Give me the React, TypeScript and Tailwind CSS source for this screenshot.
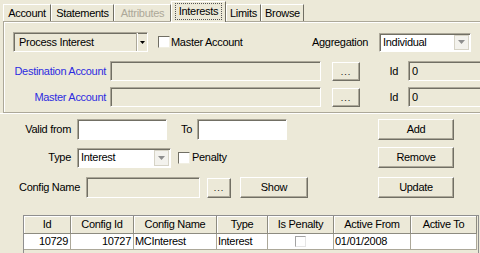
import React from 'react';

const sunken =
  'border border-t-[#aca899] border-l-[#aca899] border-r-white border-b-white shadow-[inset_1px_1px_0_#716f64]';
const raised =
  'flex items-center justify-center bg-[#ece9d8] border border-t-white border-l-white border-r-[#716f64] border-b-[#716f64] shadow-[inset_-1px_-1px_0_#aca899]';

const Check: React.FC<{ className?: string }> = ({ className = '' }) => (
  <div
    className={`w-[12px] h-[12px] shrink-0 bg-white border border-t-[#716f64] border-l-[#716f64] border-r-[#f1efe2] border-b-[#f1efe2] ${className}`}
  />
);

const Btn: React.FC<{ className?: string; children?: React.ReactNode }> = ({ className = '', children }) => (
  <div className={`${raised} shrink-0 ${className}`}>{children}</div>
);

const Dots: React.FC<{ className?: string }> = ({ className = '' }) => (
  <Btn className={className}>
    <span className="text-[9px] tracking-[1px] pt-[2px]">...</span>
  </Btn>
);

const Combo: React.FC<{ className: string; text: string }> = ({ className, text }) => (
  <div className={`${sunken} flex bg-white shrink-0 ${className}`}>
    <div className="flex-1 flex items-center pl-[3px]">{text}</div>
    <div className="w-[15px] my-[1px] mr-[1px] bg-[#f3f2ed] border border-[#d6d3c6] flex items-center justify-center">
      <svg width="7" height="4" viewBox="0 0 7 4">
        <path d="M0 0h7L3.5 4z" fill="#8e8e8e" />
      </svg>
    </div>
  </div>
);

const tabs = [
  { label: 'Account', w: 'w-[48px]' },
  { label: 'Statements', w: 'w-[63px]' },
  { label: 'Attributes', w: 'w-[57px]', disabled: true },
  { label: 'Interests', w: 'w-[55px]', active: true },
  { label: 'Limits', w: 'w-[35px]' },
  { label: 'Browse', w: 'w-[43px]' },
];

const cols = [
  { h: 'Id', v: '10729', align: 'justify-end pr-[2px]' },
  { h: 'Config Id', v: '10727', align: 'justify-end pr-[2px]' },
  { h: 'Config Name', v: 'MCInterest', align: 'justify-start pl-[1px]' },
  { h: 'Type', v: 'Interest', align: 'justify-start pl-[1px]' },
  { h: 'Is Penalty', v: '', align: 'justify-center', check: true },
  { h: 'Active From', v: '01/01/2008', align: 'justify-start pl-[1px]' },
  { h: 'Active To', v: '', align: 'justify-start' },
];

export default function App() {
  return (
    <div className="w-[480px] h-[253px] overflow-hidden bg-[#ece9d8] text-black text-[11px] tracking-[-0.3px] font-['Liberation_Sans',Arial,sans-serif] leading-none">
      {/* tab strip */}
      <div className="h-[21px] flex items-end pl-[3px]">
        {tabs.map((t) => (
          <div
            key={t.label}
            className={`${t.w} shrink-0 flex items-center justify-center border-l border-t border-r border-l-white border-t-white border-r-[#716f64] ${
              t.active ? 'h-[21px] relative z-10 bg-[#ece9d8] -mb-[1px] pb-[2px]' : 'h-[17px]'
            } ${t.disabled ? 'text-[#aca899]' : ''}`}
          >
            {t.active ? (
              <span className="border border-dotted border-[#555] px-[3px] py-[2px]">{t.label}</span>
            ) : (
              t.label
            )}
          </div>
        ))}
      </div>

      {/* upper panel */}
      <div className="ml-[3px] w-[490px] border-l border-t border-b border-[#aca899] shadow-[inset_1px_1px_0_#fff] flex flex-col pt-[10px] pb-[5px]">
        <div className="h-[20px] flex items-center pl-[9px]">
          <div className={`${sunken} w-[135px] h-[20px] flex shrink-0`}>
            <div className="flex-1 flex items-center pl-[5px]">Process Interest</div>
            <div className="w-[11px] border-l border-l-[#aca899] shadow-[inset_1px_0_0_#fff] flex items-center justify-center">
              <svg width="5" height="3" viewBox="0 0 5 3">
                <path d="M0 0h5L2.5 3z" fill="#000" />
              </svg>
            </div>
          </div>
          <Check className="ml-[10px]" />
          <div className="w-[142px] shrink-0 pl-[1px]">Master Account</div>
          <div className="w-[67px] shrink-0">Aggregation</div>
          <Combo className="w-[92px] h-[19px]" text="Individual" />
        </div>

        {['Destination Account', 'Master Account'].map((label, i) => (
          <div key={label} className={`h-[20px] flex items-center ${i === 0 ? 'mt-[9px]' : 'mt-[6px]'}`}>
            <div className="w-[102px] shrink-0 text-right text-[#2c2ce0]">{label}</div>
            <div className={`${sunken} ml-[4px] w-[211px] h-[20px] shrink-0`} />
            <Dots className="ml-[11px] w-[28px] h-[19px]" />
            <div className="w-[38px] shrink-0 text-right">Id</div>
            <div className={`${sunken} ml-[10px] w-[80px] h-[20px] shrink-0 flex items-center pl-[3px]`}>0</div>
          </div>
        ))}
      </div>

      {/* lower section */}
      <div className="border-t border-white pt-[5px]">
        <div className="h-[21px] flex items-center">
          <div className="w-[378px] shrink-0 flex items-center">
            <div className="w-[71px] shrink-0 text-right">Valid from</div>
            <div className={`${sunken} ml-[6px] w-[90px] h-[21px] bg-white shrink-0`} />
            <div className="w-[25px] shrink-0 text-right">To</div>
            <div className={`${sunken} ml-[5px] w-[90px] h-[21px] bg-white shrink-0`} />
          </div>
          <Btn className="w-[76px] h-[21px]">Add</Btn>
        </div>

        <div className="mt-[7px] h-[21px] flex items-center">
          <div className="w-[378px] shrink-0 flex items-center">
            <div className="w-[71px] shrink-0 text-right">Type</div>
            <Combo className="ml-[6px] w-[94px] h-[20px]" text="Interest" />
            <Check className="ml-[7px]" />
            <div className="pl-[2px]">Penalty</div>
          </div>
          <Btn className="w-[76px] h-[21px]">Remove</Btn>
        </div>

        <div className="mt-[9px] h-[21px] flex items-center">
          <div className="w-[378px] shrink-0 flex items-center">
            <div className="w-[80px] shrink-0 text-right">Config Name</div>
            <div className={`${sunken} ml-[6px] w-[114px] h-[21px] shrink-0`} />
            <Dots className="ml-[7px] w-[24px] h-[20px]" />
            <Btn className="ml-[9px] w-[68px] h-[21px]">Show</Btn>
          </div>
          <Btn className="w-[76px] h-[21px]">Update</Btn>
        </div>

        {/* grid */}
        <div className="mt-[17px] ml-[23px] w-[456px] h-[60px] border border-[#8f8f8f] bg-[#ece9d8]">
          <div className="grid grid-cols-[47px_63px_83px_51px_66px_77px_66px]">
            {cols.map((c) => (
              <div
                key={c.h}
                className="h-[18px] flex items-center justify-center border-r border-b border-r-[#8d8b80] border-b-[#8d8b80] shadow-[inset_1px_1px_0_#fff]"
              >
                {c.h}
              </div>
            ))}
            {cols.map((c) => (
              <div
                key={c.h + '-v'}
                className={`h-[16px] flex items-center bg-white border-r border-b border-[#aca899] ${c.align}`}
              >
                {c.check ? (
                  <div className="w-[11px] h-[11px] bg-white border border-t-[#a3a3a3] border-l-[#a3a3a3] border-r-[#e5e5e5] border-b-[#e5e5e5]" />
                ) : (
                  c.v
                )}
              </div>
            ))}
          </div>
        </div>
      </div>
    </div>
  );
}
